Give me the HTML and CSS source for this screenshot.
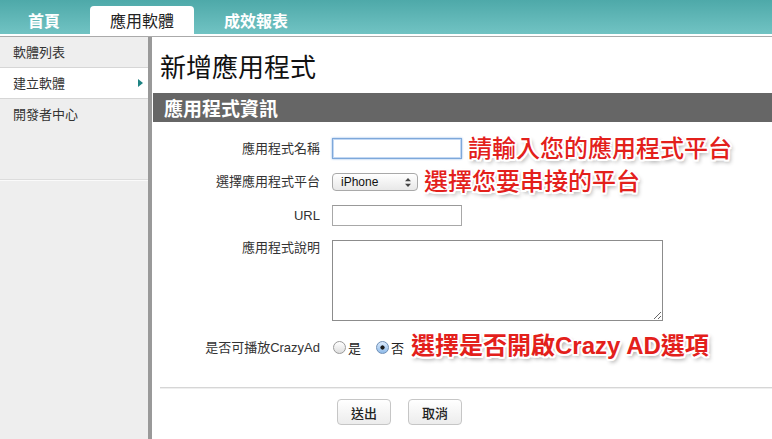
FILE: index.html
```html
<!DOCTYPE html>
<html lang="zh-Hant">
<head>
<meta charset="utf-8">
<title>新增應用程式</title>
<link rel="stylesheet" href="styles.css">
</head>
<body>
<header class="header">
  <nav class="nav">
    <a class="tab">首頁</a>
    <a class="tab tab-active">應用軟體</a>
    <a class="tab">成效報表</a>
  </nav>
</header>
<div class="layout">
  <aside class="sidebar">
    <a class="side-item">軟體列表</a>
    <a class="side-item side-active">建立軟體<span class="side-arrow"></span></a>
    <a class="side-item side-tall">開發者中心</a>
  </aside>
  <main class="main">
    <h1 class="title">新增應用程式</h1>
    <h2 class="section">應用程式資訊</h2>
    <form class="form">
      <div class="row">
        <label class="label">應用程式名稱</label>
        <div class="field">
          <input class="input input-focus" type="text">
          <span class="note">請輸入您的應用程式平台</span>
        </div>
      </div>
      <div class="row">
        <label class="label">選擇應用程式平台</label>
        <div class="field">
          <span class="select-wrap">
            <select class="select"><option>iPhone</option><option>Android</option></select>
            <svg class="select-arrows" width="6" height="9" viewBox="0 0 6 9"><path d="M3 0 L6 3.2 L0 3.2 Z M0 5.8 L6 5.8 L3 9 Z" fill="#444"/></svg>
          </span>
          <span class="note">選擇您要串接的平台</span>
        </div>
      </div>
      <div class="row">
        <label class="label label-latin">URL</label>
        <div class="field">
          <input class="input" type="text">
        </div>
      </div>
      <div class="row row-top">
        <label class="label">應用程式說明</label>
        <div class="field">
          <textarea class="textarea"></textarea>
        </div>
      </div>
      <div class="row row-radio">
        <label class="label">是否可播放CrazyAd</label>
        <div class="field field-radio">
          <label class="radio-opt"><input class="radio" type="radio" name="crazy">是</label>
          <label class="radio-opt"><input class="radio" type="radio" name="crazy" checked>否</label>
          <span class="note note-bold">選擇是否開啟Crazy AD選項</span>
        </div>
      </div>
      <div class="divider"></div>
      <div class="actions">
        <button class="btn" type="button">送出</button>
        <button class="btn" type="button">取消</button>
      </div>
    </form>
  </main>
</div>
</body>
</html>
```

FILE: styles.css
```css
* { box-sizing: border-box; }
html, body { margin: 0; height: 100%; }
body {
  font-family: "Liberation Sans", "Noto Sans CJK TC", sans-serif;
  color: #333;
  background: #fff;
  display: flex;
  flex-direction: column;
  overflow: hidden;
}

/* header */
.header {
  padding-bottom: 2px;
  border-bottom: 1px solid #aaa;
  background: #fff;
  flex-shrink: 0;
}
.nav {
  height: 34px;
  background: linear-gradient(#4ea9a9, #71c3c3);
  display: flex;
  align-items: flex-end;
  padding-left: 8px;
  gap: 10px;
}
.tab {
  height: 28px;
  line-height: 28px;
  padding: 0 20px;
  font-family: "Noto Sans CJK TC", sans-serif;
  font-size: 16px;
  font-weight: 700;
  color: #fff;
  border-radius: 4px 4px 0 0;
}
.tab-active {
  background: #fff;
  color: #222;
  font-weight: 400;
}

/* layout */
.layout {
  flex: 1;
  display: flex;
  min-height: 0;
}
.sidebar {
  width: 152px;
  flex-shrink: 0;
  background: #eeeeee;
  border-right: 4px solid #999;
}
.side-item {
  display: block;
  position: relative;
  height: 31px;
  line-height: 30px;
  padding-left: 13px;
  font-family: "Noto Sans CJK TC", sans-serif;
  font-size: 13px;
  color: #333;
  border-bottom: 1px solid #d6d6d6;
}
.side-active { background: #fff; }
.side-tall { height: 81px; border-bottom-color: #dcdcdc; box-shadow: 0 1px 0 #fafafa; }
.side-arrow {
  position: absolute;
  right: 5px;
  top: 11px;
  width: 0;
  height: 0;
  border-left: 5px solid #1e8383;
  border-top: 4px solid transparent;
  border-bottom: 4px solid transparent;
}

/* main */
.main {
  flex: 1;
  min-width: 0;
}
.title {
  margin: 14px 0 12px 8px;
  font-family: "Noto Sans CJK TC", sans-serif;
  font-size: 26px;
  line-height: 30px;
  font-weight: 400;
  color: #111;
}
.section {
  margin: 0 0 0 1px;
  height: 29px;
  line-height: 29px;
  padding-left: 11px;
  background: #666;
  color: #fff;
  font-family: "Noto Sans CJK TC", sans-serif;
  font-size: 19px;
  font-weight: 700;
}

/* form */
.form {
  margin-left: 8px;
  padding-top: 16px;
  display: flex;
  flex-direction: column;
  gap: 14px;
}
.row {
  display: grid;
  grid-template-columns: 160px 1fr;
  column-gap: 12px;
  align-items: center;
}
.row-top { align-items: start; }
.row-radio { margin-top: 2px; }
.label {
  text-align: right;
  font-size: 13px;
  line-height: 16px;
  color: #333;
}
.row-top .label { line-height: 15px; }
.field {
  display: flex;
  align-items: center;
}
.input {
  width: 130px;
  height: 21px;
  border: 1px solid #a8a8a8;
  border-top-color: #999;
  padding: 0 3px;
  font-size: 13px;
  margin: 0;
  background: #fff;
  display: block;
}
.input-focus {
  border-color: #7ea8da;
  box-shadow: inset 0 0 0 1px #c3d8f3, 0 0 2px #8cb5e6;
  outline: none;
}
.select-wrap {
  position: relative;
  display: block;
  height: 18px;
}
.select {
  appearance: none;
  -webkit-appearance: none;
  width: 86px;
  height: 18px;
  margin: 0;
  border: 1px solid #a9a9a9;
  border-radius: 4px;
  background: linear-gradient(#ffffff, #e8e8e8);
  font-family: "Liberation Sans", sans-serif;
  font-size: 12px;
  color: #111;
  padding: 0 0 0 8px;
  display: block;
}
.select-arrows {
  position: absolute;
  right: 7px;
  top: 5px;
}
.textarea {
  width: 331px;
  height: 81px;
  margin: 0;
  border: 1px solid #8c8c8c;
  display: block;
}
.field-radio { height: 21px; }
.radio-opt {
  display: flex;
  align-items: center;
  font-family: "Noto Sans CJK TC", sans-serif;
  font-size: 13px;
  color: #222;
  margin-right: 14px;
}
.radio-opt:nth-child(2) { margin-right: 0; }
.radio {
  appearance: none;
  -webkit-appearance: none;
  width: 13px;
  height: 13px;
  margin: 0 2px 0 1px;
  border: 1px solid #9a9a9a;
  border-radius: 50%;
  background: linear-gradient(#ffffff, #dedede);
}
.radio:checked {
  border-color: #6f8fb6;
  background: radial-gradient(circle, #1a1a1a 0 1.8px, transparent 2.4px), linear-gradient(#dbeafc, #8fbbe9);
}
.note {
  margin-left: 6px;
  margin-top: -4px;
  height: 18px;
  line-height: 18px;
  font-family: "Noto Sans CJK TC", sans-serif;
  font-size: 24px;
  font-weight: 500;
  color: #e3201b;
  white-space: nowrap;
  text-shadow:
    -2px 0 0 #fff, 2px 0 0 #fff, 0 -2px 0 #fff, 0 2px 0 #fff,
    -1.5px -1.5px 0 #fff, 1.5px -1.5px 0 #fff, -1.5px 1.5px 0 #fff, 1.5px 1.5px 0 #fff,
    0 0 3px #fff,
    2px 3px 4px rgba(0, 0, 0, 0.45);
}
.note-bold {
  font-family: "Liberation Sans", "Noto Sans CJK TC", sans-serif;
  font-weight: 700;
  margin-left: 7px;
}
.divider {
  margin-top: 15px;
  height: 0;
  border-top: 1px solid #d6d6d6;
  box-shadow: 0 1px 0 #efefef;
}
.actions {
  display: flex;
  gap: 17px;
  padding-left: 177px;
  margin-top: -3px;
}
.btn {
  width: 54px;
  height: 26px;
  margin: 0;
  padding: 0;
  border: 1px solid #c6c6c6;
  border-radius: 4px;
  background: linear-gradient(#ffffff, #ececec);
  font-family: "Noto Sans CJK TC", sans-serif;
  font-size: 13px;
  font-weight: 500;
  color: #222;
}
```
